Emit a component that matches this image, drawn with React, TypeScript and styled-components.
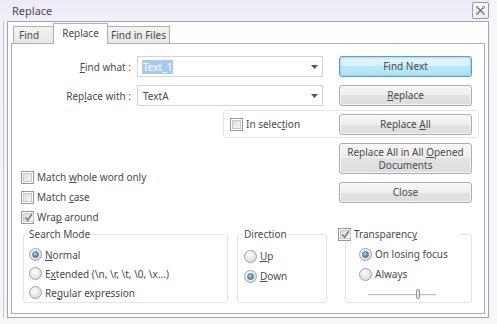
import styled, { createGlobalStyle } from "styled-components";

const GlobalStyle = createGlobalStyle`
  html, body {
    margin: 0;
    padding: 0;
    background: #f6f6f9;
  }
  body {
    font-family: "Noto Sans", "Open Sans", sans-serif;
    font-size: 10px;
    color: #4a4a4a;
  }
  * {
    box-sizing: border-box;
  }
`;

const Window = styled.div`
  width: 490px;
  height: 318px;
  display: flex;
  flex-direction: column;
  background: linear-gradient(to bottom, #eceaf6, #f2f1f9 21px, #f4f4f9);
`;

const TitleBar = styled.div`
  height: 21px;
  display: flex;
  align-items: center;
  justify-content: space-between;
  padding: 0 1px 0 12px;
  font-size: 11px;
  color: #4a4a52;
`;

const CloseBox = styled.div`
  width: 17px;
  height: 17px;
  border: 1px solid #9a9aa2;
  border-radius: 2px;
  background: linear-gradient(to bottom, #fbfbfe, #ececf3);
  display: flex;
  align-items: center;
  justify-content: center;
`;

const Client = styled.div`
  margin-left: 3px;
  width: 486px;
  padding-left: 3px;
  border-left: 1px solid #c9c9cf;
`;

const Frame = styled.div`
  width: 482px;
  height: 297px;
  border: 1px solid #a4a4a8;
  background: #fdfdfd;
  padding: 1px 3px 3px 3px;
  display: flex;
  flex-direction: column;
`;

const TabBar = styled.div`
  height: 20px;
  display: flex;
  align-items: flex-end;
  padding-left: 2px;
  position: relative;
  z-index: 1;
`;

const Tab = styled.div<{ $active?: boolean; $w: number }>`
  width: ${(p) => p.$w}px;
  height: ${(p) => (p.$active ? 21 : 17)}px;
  margin-bottom: ${(p) => (p.$active ? -1 : 0)}px;
  margin-left: -1px;
  border: 1px solid #aeaeb3;
  border-bottom: none;
  background: ${(p) =>
    p.$active ? "#ffffff" : "linear-gradient(to bottom, #f4f4f4, #e6e6e6)"};
  display: flex;
  align-items: center;
  justify-content: center;
  padding-bottom: ${(p) => (p.$active ? 2 : 0)}px;
  position: relative;
  z-index: ${(p) => (p.$active ? 2 : 1)};
  &:first-child {
    margin-left: 0;
    justify-content: flex-start;
    padding-left: 5px;
  }
`;

const Panel = styled.div`
  width: 474px;
  height: 271px;
  border: 1px solid #acacb1;
  background: #ffffff;
  padding: 12px 12px 9px 9px;
  display: flex;
  flex-direction: column;
`;

const FieldRow = styled.div<{ $mt?: number }>`
  display: flex;
  align-items: center;
  height: 21px;
  margin-top: ${(p) => p.$mt ?? 0}px;
`;

const FieldLabel = styled.div`
  width: 110px;
  text-align: right;
  margin-right: 6px;
  white-space: nowrap;
`;

const Combo = styled.div`
  width: 186px;
  height: 21px;
  border: 1px solid #d3d4d8;
  background: #fff;
  display: flex;
  align-items: center;
  padding-left: 4px;
  position: relative;
`;

const ComboText = styled.span<{ $selected?: boolean }>`
  padding: 0 1px;
  line-height: 14px;
  background: ${(p) => (p.$selected ? "#a6caee" : "transparent")};
  color: ${(p) => (p.$selected ? "#ffffff" : "inherit")};
`;

const ComboArrow = styled.svg`
  position: absolute;
  right: 4px;
  top: 8px;
`;

const Button = styled.div<{ $default?: boolean; $h?: number }>`
  width: 133px;
  height: ${(p) => p.$h ?? 21}px;
  margin-left: auto;
  border: 1px solid ${(p) => (p.$default ? "#5a9fcb" : "#ababab")};
  border-radius: 3px;
  background: ${(p) =>
    p.$default
      ? "linear-gradient(to bottom, #e8f7fd, #d3f0fb 50%, #bde7f8 50%, #b0e1f5)"
      : "linear-gradient(to bottom, #f6f6f6, #eeeeee 50%, #e3e3e3 50%, #dddddd)"};
  box-shadow: ${(p) =>
    p.$default
      ? "0 0 2px 1px rgba(130, 210, 240, 0.7) inset"
      : "0 0 0 1px rgba(255,255,255,0.7) inset"};
  display: flex;
  align-items: center;
  justify-content: center;
  text-align: center;
  line-height: 13px;
`;

const SelectionBox = styled.div`
  margin-top: 4px;
  margin-left: 202px;
  margin-right: -7px;
  height: 28px;
  border: 1px solid #e6e6e8;
  border-radius: 3px;
  display: flex;
  align-items: center;
  padding: 0 6px;
`;

const CheckLine = styled.label<{ $h?: number }>`
  display: flex;
  align-items: center;
  gap: 3px;
  height: ${(p) => p.$h ?? 20}px;
  white-space: nowrap;
`;

const Box = styled.span`
  width: 13px;
  height: 13px;
  flex: none;
  border: 1px solid #97989d;
  background: #fff;
  padding: 1px;
  display: flex;
`;

const BoxInner = styled.span`
  flex: 1;
  background: linear-gradient(135deg, #dcdde0, #f7f7f8);
  border: 1px solid #c8c9cc;
  display: flex;
  align-items: center;
  justify-content: center;
`;

const Round = styled.span`
  width: 13px;
  height: 13px;
  flex: none;
  border-radius: 50%;
  border: 1px solid #a2a3a8;
  background: radial-gradient(circle at 40% 35%, #ffffff, #d8d9dd 80%);
  display: flex;
  align-items: center;
  justify-content: center;
`;

const Dot = styled.span`
  width: 7px;
  height: 7px;
  border-radius: 50%;
  background: radial-gradient(circle at 40% 35%, #add8f3, #36729c 85%);
  border: 1px solid #4a789b;
`;

const U = styled.span`
  text-decoration: underline;
  text-underline-offset: 1px;
`;

const MiddleRow = styled.div`
  margin-top: 5px;
  display: flex;
  align-items: flex-start;
`;

const OptionStack = styled.div`
  padding-top: 24px;
  display: flex;
  flex-direction: column;
`;

const ButtonStack = styled.div`
  margin-left: auto;
  display: flex;
  flex-direction: column;
  gap: 8px;
`;

const GroupRow = styled.div`
  display: flex;
  align-items: flex-start;
`;

const Group = styled.fieldset<{ $w: number; $ml: number; $pl: number; $pt: number }>`
  width: ${(p) => p.$w}px;
  height: 76px;
  margin: 0 0 0 ${(p) => p.$ml}px;
  padding: ${(p) => p.$pt}px 0 0 ${(p) => p.$pl}px;
  border: 1px solid #e4e4e7;
  border-radius: 3px;
  min-width: 0;
`;

const Legend = styled.legend<{ $w?: number; $ml?: number }>`
  padding: 0 1px;
  line-height: 14px;
  height: 14px;
  margin-left: ${(p) => p.$ml ?? 0}px;
  width: ${(p) => (p.$w ? `${p.$w}px` : "auto")};
  display: flex;
  align-items: center;
  gap: 3px;
  background: #fff;
`;

const RadioLine = styled.label<{ $h: number }>`
  display: flex;
  align-items: center;
  gap: 3px;
  height: ${(p) => p.$h}px;
  padding-left: 1px;
  white-space: nowrap;
`;

const SliderWrap = styled.div`
  margin: 6px 0 0 10px;
  width: 68px;
  height: 9px;
  position: relative;
  display: flex;
  align-items: center;
`;

const Track = styled.div`
  width: 100%;
  height: 2px;
  border-top: 1px solid #bdbdc1;
  border-bottom: 1px solid #f2f2f2;
`;

const Thumb = styled.div`
  position: absolute;
  left: 48px;
  top: -1px;
  width: 4px;
  height: 10px;
  border: 1px solid #939398;
  border-radius: 2px;
  background: linear-gradient(to right, #f4f4f4, #dadada);
`;

function Check({ checked }: { checked?: boolean }) {
  return (
    <Box>
      <BoxInner>
        {checked && (
          <svg width="9" height="9" viewBox="0 0 9 9">
            <path d="M1.2 4.6 L3.6 7.2 L7.8 1.2" fill="none" stroke="#76787d" strokeWidth="1.5" />
          </svg>
        )}
      </BoxInner>
    </Box>
  );
}

function Radio({ checked }: { checked?: boolean }) {
  return <Round>{checked && <Dot />}</Round>;
}

function Arrow() {
  return (
    <ComboArrow width="7" height="4" viewBox="0 0 7 4">
      <path d="M0 0 H7 L3.5 4 Z" fill="#555" />
    </ComboArrow>
  );
}

export default function App() {
  return (
    <>
      <GlobalStyle />
      <Window>
        <TitleBar>
          <span>Replace</span>
          <CloseBox>
            <svg width="9" height="9" viewBox="0 0 9 9">
              <path d="M1.5 1.5 L7.5 7.5 M7.5 1.5 L1.5 7.5" stroke="#6a6a74" strokeWidth="1.2" />
              <path d="M0.5 0.5 h2 M0.5 0.5 v2 M8.5 0.5 h-2 M8.5 0.5 v2 M0.5 8.5 h2 M0.5 8.5 v-2 M8.5 8.5 h-2 M8.5 8.5 v-2" stroke="#8a8a94" strokeWidth="0.8" />
            </svg>
          </CloseBox>
        </TitleBar>
        <Client>
          <Frame>
            <TabBar>
              <Tab $w={41}>Find</Tab>
              <Tab $w={55} $active>Replace</Tab>
              <Tab $w={63}>Find in Files</Tab>
            </TabBar>
            <Panel>
              <FieldRow>
                <FieldLabel>
                  <U>F</U>ind what :
                </FieldLabel>
                <Combo>
                  <ComboText $selected>Text_1</ComboText>
                  <Arrow />
                </Combo>
                <Button $default>Find Next</Button>
              </FieldRow>
              <FieldRow $mt={8}>
                <FieldLabel>
                  Rep<U>l</U>ace with :
                </FieldLabel>
                <Combo>
                  <ComboText>TextA</ComboText>
                  <Arrow />
                </Combo>
                <Button>
                  <span>
                    <U>R</U>eplace
                  </span>
                </Button>
              </FieldRow>
              <SelectionBox>
                <CheckLine $h={21}>
                  <Check />
                  <span>
                    In selec<U>t</U>ion
                  </span>
                </CheckLine>
                <Button>
                  <span>
                    Replace <U>A</U>ll
                  </span>
                </Button>
              </SelectionBox>
              <MiddleRow>
                <OptionStack>
                  <CheckLine>
                    <Check />
                    <span>
                      Match <U>w</U>hole word only
                    </span>
                  </CheckLine>
                  <CheckLine>
                    <Check />
                    <span>
                      Match <U>c</U>ase
                    </span>
                  </CheckLine>
                  <CheckLine>
                    <Check checked />
                    <span>
                      Wra<U>p</U> around
                    </span>
                  </CheckLine>
                </OptionStack>
                <ButtonStack>
                  <Button $h={31}>
                    <span>
                      Replace All in All <U>O</U>pened
                      <br />
                      Documents
                    </span>
                  </Button>
                  <Button>Close</Button>
                </ButtonStack>
              </MiddleRow>
              <GroupRow>
                <Group $w={205} $ml={2} $pl={4} $pt={4}>
                  <Legend>Search Mode</Legend>
                  <RadioLine $h={19}>
                    <Radio checked />
                    <span>
                      <U>N</U>ormal
                    </span>
                  </RadioLine>
                  <RadioLine $h={19}>
                    <Radio />
                    <span>
                      E<U>x</U>tended (\n, \r, \t, \0, \x...)
                    </span>
                  </RadioLine>
                  <RadioLine $h={19}>
                    <Radio />
                    <span>
                      Re<U>g</U>ular expression
                    </span>
                  </RadioLine>
                </Group>
                <Group $w={90} $ml={9} $pl={5} $pt={5}>
                  <Legend>Direction</Legend>
                  <RadioLine $h={20}>
                    <Radio />
                    <span>
                      <U>U</U>p
                    </span>
                  </RadioLine>
                  <RadioLine $h={20}>
                    <Radio checked />
                    <span>
                      <U>D</U>own
                    </span>
                  </RadioLine>
                </Group>
                <Group $w={127} $ml={18} $pl={12} $pt={3}>
                  <Legend $w={122} $ml={-21}>
                    <Check checked />
                    <span>
                      Transparenc<U>y</U>
                    </span>
                  </Legend>
                  <RadioLine $h={20}>
                    <Radio checked />
                    <span>On losing focus</span>
                  </RadioLine>
                  <RadioLine $h={20}>
                    <Radio />
                    <span>Always</span>
                  </RadioLine>
                  <SliderWrap>
                    <Track />
                    <Thumb />
                  </SliderWrap>
                </Group>
              </GroupRow>
            </Panel>
          </Frame>
        </Client>
      </Window>
    </>
  );
}
